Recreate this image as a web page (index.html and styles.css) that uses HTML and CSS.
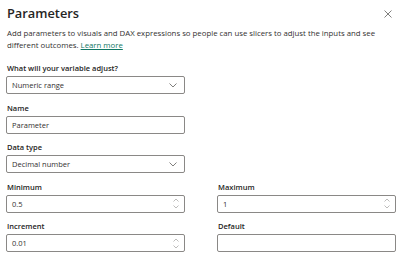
FILE: index.html
```html
<!DOCTYPE html>
<html>
<head>
<meta charset="utf-8">
<link rel="stylesheet" href="styles.css">
</head>
<body>
<div class="panel">
  <div class="header">
    <h1 class="title">Parameters</h1>
    <svg class="close" width="8" height="8" viewBox="0 0 8 8"><path d="M0.5 0.5L7.5 7.5M7.5 0.5L0.5 7.5" stroke="#605e5c" stroke-width="0.8" fill="none"/></svg>
  </div>
  <p class="desc">Add parameters to visuals and DAX expressions so people can use slicers to adjust the inputs and see different outcomes. <a class="link" href="#">Learn more</a></p>
  <div class="form">
    <div class="field wide">
      <div class="label">What will your variable adjust?</div>
      <div class="box"><span class="val">Numeric range</span><svg class="chev" width="8" height="5" viewBox="0 0 8 5"><path d="M0.5 0.5L4 4L7.5 0.5" stroke="#605e5c" stroke-width="0.8" fill="none"/></svg></div>
    </div>
    <div class="field wide">
      <div class="label">Name</div>
      <div class="box"><span class="val">Parameter</span></div>
    </div>
    <div class="field wide">
      <div class="label">Data type</div>
      <div class="box"><span class="val">Decimal number</span><svg class="chev" width="8" height="5" viewBox="0 0 8 5"><path d="M0.5 0.5L4 4L7.5 0.5" stroke="#605e5c" stroke-width="0.8" fill="none"/></svg></div>
    </div>
    <div class="field">
      <div class="label">Minimum</div>
      <div class="box"><span class="val">0.5</span><svg class="spin" width="6" height="11" viewBox="0 0 6 11"><path d="M0.5 3.5L3 1L5.5 3.5M0.5 7.5L3 10L5.5 7.5" stroke="#a19f9d" stroke-width="0.7" fill="none"/></svg></div>
    </div>
    <div class="field">
      <div class="label">Maximum</div>
      <div class="box"><span class="val">1</span><svg class="spin" width="6" height="11" viewBox="0 0 6 11"><path d="M0.5 3.5L3 1L5.5 3.5M0.5 7.5L3 10L5.5 7.5" stroke="#a19f9d" stroke-width="0.7" fill="none"/></svg></div>
    </div>
    <div class="field">
      <div class="label">Increment</div>
      <div class="box"><span class="val">0.01</span><svg class="spin" width="6" height="11" viewBox="0 0 6 11"><path d="M0.5 3.5L3 1L5.5 3.5M0.5 7.5L3 10L5.5 7.5" stroke="#a19f9d" stroke-width="0.7" fill="none"/></svg></div>
    </div>
    <div class="field">
      <div class="label">Default</div>
      <div class="box"><span class="val"></span></div>
    </div>
  </div>
</div>
</body>
</html>
```
FILE: styles.css
```css
html, body {
  margin: 0;
  padding: 0;
  background: #ffffff;
}
body {
  font-family: "Open Sans", "Noto Sans", sans-serif;
  color: #252423;
}
.panel {
  padding: 5px 4px 0 6px;
  width: 390px;
}
.header {
  display: flex;
  justify-content: space-between;
  align-items: center;
  height: 16px;
}
.title {
  margin: 0 0 0 1px;
  font-size: 12.8px;
  font-weight: 600;
  line-height: 16px;
  color: #252423;
}
.close {
  margin-right: 4px;
  margin-top: 1px;
}
.desc {
  margin: 6px 0 0 1px;
  font-size: 7.8px;
  line-height: 12px;
  color: #323130;
}
.link {
  color: #117865;
  text-decoration: underline;
}
.form {
  margin-top: 12px;
  display: grid;
  grid-template-columns: 179px 179px;
  column-gap: 32px;
  row-gap: 8.6px;
}
.wide {
  grid-column: 1 / -1;
  width: 179px;
}
.field {
  display: flex;
  flex-direction: column;
}
.label {
  font-size: 7.5px;
  font-weight: 600;
  line-height: 11px;
  margin: 0 0 2px 1px;
  color: #252423;
}
.box {
  box-sizing: border-box;
  height: 18px;
  border: 1px solid #8a8886;
  border-radius: 2px;
  display: flex;
  align-items: center;
  justify-content: space-between;
  padding: 0 6px 0 5px;
}
.val {
  font-size: 7.5px;
  color: #323130;
}
.chev {
  margin-right: 1px;
}
.spin {
  margin-right: -1px;
}
```
